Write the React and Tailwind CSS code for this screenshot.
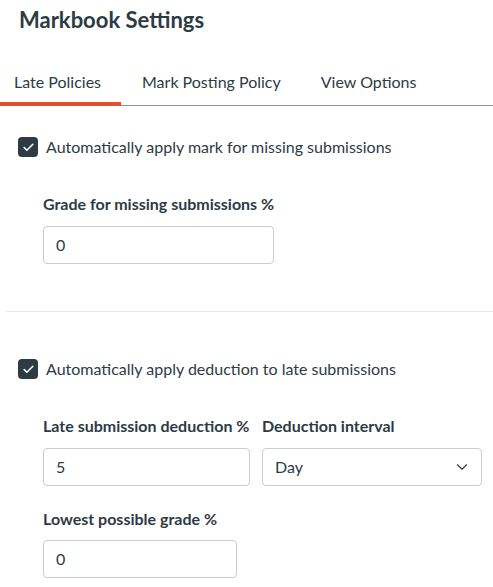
import { ChevronDown, Check } from 'lucide-react';

function Checkbox({ label }) {
    return (
        <label className="flex items-center gap-[8px] pl-[18px]">
            <span className="flex h-[20px] w-[20px] items-center justify-center rounded-[4px] bg-[#2d3b45]">
                <Check size={13} strokeWidth={3} className="text-white" />
            </span>
            <span className="text-[16px] text-[#2d3b45]">{label}</span>
        </label>
    );
}

function Field({ label, value, width, gap = 'mt-[12px]' }) {
    return (
        <div className="flex flex-col">
            <span className="text-[16px] font-bold leading-[20px] text-[#2d3b45]">{label}</span>
            <div
                className={`${gap} flex h-[38px] items-center rounded-[4px] border border-[#c7cdd1] bg-white px-[12px] text-[16px] text-[#2d3b45] ${width}`}
            >
                {value}
            </div>
        </div>
    );
}

export default function App() {
    const tabs = ['Late Policies', 'Mark Posting Policy', 'View Options'];

    return (
        <div className="h-[587px] w-[493px] overflow-hidden bg-white font-['Lato','Noto_Sans',sans-serif] text-[#2d3b45]">
            {/* Header */}
            <h1 className="pl-[19px] pt-[6px] text-[22px] font-bold leading-[28px]">Markbook Settings</h1>

            {/* Tabs */}
            <div className="mt-[38px] flex border-b border-[#8b969e]">
                {tabs.map((t, i) => (
                    <div
                        key={t}
                        className={
                            i === 0
                                ? 'relative w-[121px] pl-[14px] pb-[13px] text-[16px] leading-[20px]'
                                : i === 1
                                ? 'pl-[21px] pr-[20px] pb-[13px] text-[16px] leading-[20px]'
                                : 'pl-[20px] pr-[20px] pb-[13px] text-[16px] leading-[20px]'
                        }
                    >
                        {t}
                        {i === 0 && <span className="absolute bottom-[-1px] left-0 h-[4px] w-[121px] bg-[#e4502b]" />}
                    </div>
                ))}
            </div>

            {/* Missing submissions */}
            <div className="pt-[29px]">
                <Checkbox label="Automatically apply mark for missing submissions" />
                <div className="mt-[35px] pl-[43px]">
                    <Field label="Grade for missing submissions %" value="0" width="w-[231px]" />
                </div>
            </div>

            <div className="ml-[6px] mt-[47px] h-px bg-[#e6e8ea]" />

            {/* Late submissions */}
            <div className="pt-[45px]">
                <Checkbox label="Automatically apply deduction to late submissions" />
                <div className="mt-[35px] flex gap-[12px] pl-[43px]">
                    <Field label="Late submission deduction %" value="5" width="w-[207px]" />
                    <div className="flex flex-col">
                        <span className="text-[16px] font-bold leading-[20px]">Deduction interval</span>
                        <div className="mt-[12px] flex h-[38px] w-[220px] items-center justify-between rounded-[4px] border border-[#c7cdd1] px-[12px] text-[16px]">
                            Day
                            <ChevronDown size={18} strokeWidth={1.5} className="mr-[-2px]" />
                        </div>
                    </div>
                </div>
                <div className="mt-[23px] pl-[43px]">
                    <Field label="Lowest possible grade %" value="0" width="w-[194px]" gap="mt-[11px]" />
                </div>
            </div>
        </div>
    );
}
